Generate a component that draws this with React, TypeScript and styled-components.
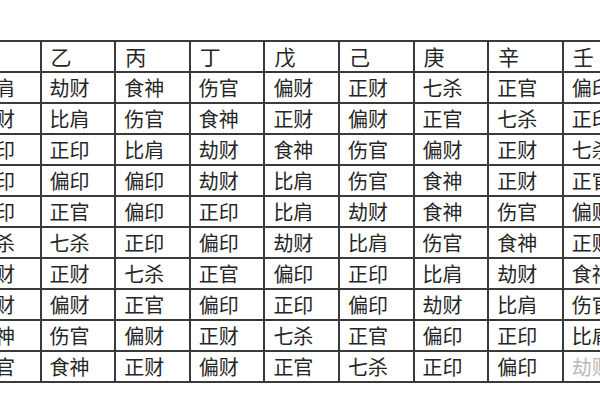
import React from 'react'
import styled, { createGlobalStyle } from 'styled-components'

const GlobalStyle = createGlobalStyle`
  html, body {
    margin: 0;
    padding: 0;
    background: #fff;
  }
  body {
    width: 600px;
    height: 400px;
    overflow: hidden;
  }
`

const header = ['', '乙', '丙', '丁', '戊', '己', '庚', '辛', '壬']

const rows = [
  ['比肩', '劫财', '食神', '伤官', '偏财', '正财', '七杀', '正官', '偏印'],
  ['劫财', '比肩', '伤官', '食神', '正财', '偏财', '正官', '七杀', '正印'],
  ['偏印', '正印', '比肩', '劫财', '食神', '伤官', '偏财', '正财', '七杀'],
  ['正印', '偏印', '偏印', '劫财', '比肩', '伤官', '食神', '正财', '正官'],
  ['偏印', '正官', '偏印', '正印', '比肩', '劫财', '食神', '伤官', '偏财'],
  ['七杀', '七杀', '正印', '偏印', '劫财', '比肩', '伤官', '食神', '正财'],
  ['正财', '正财', '七杀', '正官', '偏印', '正印', '比肩', '劫财', '食神'],
  ['偏财', '偏财', '正官', '偏印', '正印', '偏印', '劫财', '比肩', '伤官'],
  ['食神', '伤官', '偏财', '正财', '七杀', '正官', '偏印', '正印', '比肩'],
  ['正官', '食神', '正财', '偏财', '正官', '七杀', '正印', '偏印', '劫财'],
]

const Page = styled.div`
  width: 600px;
  height: 400px;
  overflow: hidden;
  padding-top: 40px;
  box-sizing: border-box;
`

const Table = styled.table`
  margin-left: -35px;
  border-collapse: collapse;
  table-layout: fixed;
  width: 672px;
  font-family: 'Noto Sans CJK SC', 'Noto Sans', sans-serif;
  color: #262626;
`

const Col = styled.col`
  width: 74.6px;
`

const Row = styled.tr`
  height: 31px;
`

const Cell = styled.td<{ $faded?: boolean }>`
  border: 2px solid #3a3a3a;
  padding: 0 0 0 8px;
  font-size: 20px;
  line-height: 1;
  white-space: nowrap;
  overflow: hidden;
  text-align: left;
  vertical-align: middle;
  color: ${(p) => (p.$faded ? '#b9b9b9' : 'inherit')};
`

const HeadCell = styled(Cell)`
  font-size: 21px;
  padding-left: 9px;
`

export default function App() {
  return (
    <Page>
      <GlobalStyle />
      <Table>
        <colgroup>
          {header.map((_, i) => (
            <Col key={i} />
          ))}
        </colgroup>
        <tbody>
          <Row>
            {header.map((h, i) => (
              <HeadCell key={i}>{h}</HeadCell>
            ))}
          </Row>
          {rows.map((r, ri) => (
            <Row key={ri}>
              {r.map((c, ci) => (
                <Cell key={ci} $faded={ri === rows.length - 1 && ci === r.length - 1}>
                  {c}
                </Cell>
              ))}
            </Row>
          ))}
        </tbody>
      </Table>
    </Page>
  )
}
